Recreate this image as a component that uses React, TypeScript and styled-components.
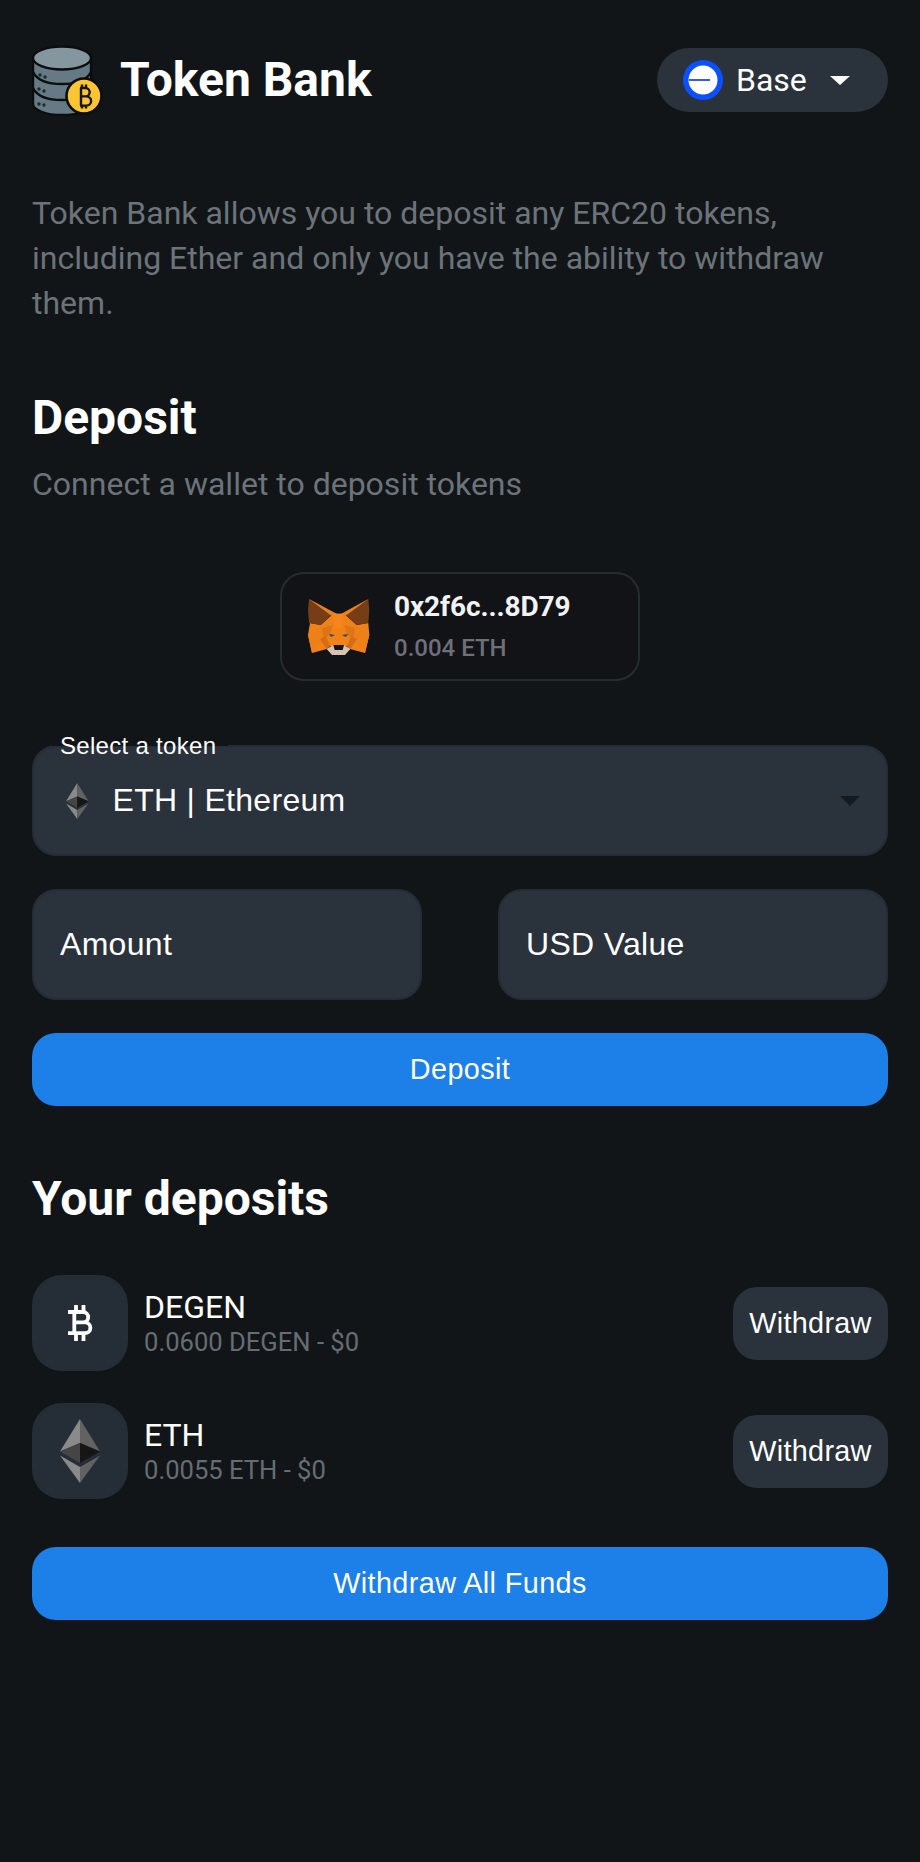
import React from "react";
import styled, { createGlobalStyle } from "styled-components";

const Global = createGlobalStyle`
  html, body { margin: 0; padding: 0; background: #111518; }
  * { box-sizing: border-box; }
`;

const Page = styled.main`
  width: 920px;
  min-height: 1862px;
  padding: 44px 32px 0;
  background: #111518;
  font-family: Roboto, sans-serif;
  color: #fff;
`;
const Header = styled.header`
  display: flex;
  align-items: center;
  justify-content: space-between;
  height: 72px;
`;
const Brand = styled.div`
  display: flex;
  align-items: center;
  gap: 16px;
`;
const Title = styled.h1`
  margin: 0;
  font-size: 48px;
  line-height: 52px;
  font-weight: 700;
`;
const NetworkPill = styled.button`
  width: 231px;
  height: 64px;
  border: 0;
  border-radius: 32px;
  background: #2a323c;
  color: #fff;
  font: 400 32px Roboto, sans-serif;
  display: flex;
  align-items: center;
  padding: 0 0 0 26px;
`;
const NetworkName = styled.span`
  margin-left: 13px;
`;
const PillCaret = styled.span`
  margin-left: 23px;
  width: 0;
  height: 0;
  border-left: 10px solid transparent;
  border-right: 10px solid transparent;
  border-top: 9px solid #fff;
`;
const Intro = styled.p`
  margin: 75px 0 0;
  font-size: 32px;
  line-height: 45px;
  color: #6c7379;
`;
const Heading = styled.h2<{ $top: number }>`
  margin: ${(p) => p.$top}px 0 0;
  font-size: 48px;
  line-height: 52px;
  font-weight: 700;
`;
const Sub = styled.p`
  margin: 22px 0 0;
  font-size: 32px;
  line-height: 36px;
  color: #6c7379;
`;
const WalletRow = styled.div`
  display: flex;
  justify-content: center;
  margin-top: 70px;
`;
const WalletCard = styled.div`
  width: 360px;
  height: 109px;
  border: 2px solid #292b33;
  border-radius: 24px;
  background: #111317;
  display: flex;
  align-items: center;
  padding-left: 26px;
  gap: 24px;
`;
const WalletText = styled.div`
  display: flex;
  flex-direction: column;
  gap: 13px;
`;
const Address = styled.div`
  font-size: 28px;
  line-height: 30px;
  font-weight: 700;
  color: #f2f2f4;
  letter-spacing: -0.1px;
`;
const Balance = styled.div`
  font-size: 24px;
  line-height: 26px;
  font-weight: 500;
  color: #6f6f7a;
`;
const SelectField = styled.div`
  position: relative;
  margin-top: 64px;
  height: 111px;
  background: #2a323c;
  border: 2px solid #252c36;
  border-radius: 24px;
  display: flex;
  align-items: center;
  padding: 0 26px 0 32px;
  font-family: "Liberation Sans", Arial, sans-serif;
  font-size: 32px;
  letter-spacing: 0.3px;
`;
const FloatingLabel = styled.label`
  position: absolute;
  left: 18px;
  top: -15px;
  padding: 0 12px 0 8px;
  height: 28px;
  line-height: 28px;
  font-size: 24px;
  background: linear-gradient(#111518 0 14px, transparent 14px);
`;
const SelectValue = styled.span`
  margin-left: 24px;
  flex: 1;
`;
const DarkCaret = styled.span`
  width: 0;
  height: 0;
  border-left: 10px solid transparent;
  border-right: 10px solid transparent;
  border-top: 10px solid #16191f;
`;
const InputGrid = styled.div`
  display: grid;
  grid-template-columns: 390px 390px;
  justify-content: space-between;
  margin-top: 33px;
`;
const InputBox = styled.div`
  height: 111px;
  padding: 0 26px;
  background: #2a323c;
  border: 2px solid #252c36;
  border-radius: 24px;
  display: flex;
  align-items: center;
  font-family: "Liberation Sans", Arial, sans-serif;
  font-size: 32px;
  letter-spacing: 0.3px;
`;
const PrimaryButton = styled.button<{ $top: number }>`
  display: block;
  width: 100%;
  height: 73px;
  margin-top: ${(p) => p.$top}px;
  border: 0;
  border-radius: 24px;
  background: #1c80e8;
  color: #fff;
  font: 400 28.8px "Liberation Sans", Arial, sans-serif;
  letter-spacing: 0.4px;
`;
const DepositList = styled.div`
  margin-top: 50px;
  display: flex;
  flex-direction: column;
  gap: 32px;
`;
const DepositRow = styled.div`
  display: flex;
  align-items: center;
  height: 96px;
`;
const TokenTile = styled.div`
  width: 96px;
  height: 96px;
  border-radius: 30px;
  background: #252d37;
  display: flex;
  align-items: center;
  justify-content: center;
  flex: none;
`;
const TokenInfo = styled.div`
  margin-left: 16px;
  flex: 1;
`;
const TokenName = styled.div`
  font-size: 32px;
  line-height: 34px;
`;
const TokenAmount = styled.div`
  margin-top: 3px;
  font-size: 25.6px;
  line-height: 30px;
  color: #666d72;
`;
const WithdrawButton = styled.button`
  width: 155px;
  height: 73px;
  border: 0;
  border-radius: 24px;
  background: #2a323c;
  color: #fff;
  font: 400 28.8px "Liberation Sans", Arial, sans-serif;
  letter-spacing: 0.3px;
`;

const LogoIcon = () => (
  <svg width="72" height="72" viewBox="0 0 72 72">
    <g stroke="#0b0d0e" strokeWidth="2.4">
      <path d="M1 14v46c0 6 13 11 29 11s29-5 29-11V14z" fill="#667a86" />
      <ellipse cx="30" cy="14" rx="29" ry="11.5" fill="#84979f" />
      <path d="M1 28c4 8 15 12 29 12s25-4 29-12M1 44c4 8 15 12 29 12s25-4 29-12" fill="none" />
    </g>
    <g fill="#1e2a31">
      <circle cx="8" cy="31" r="1.7" /><circle cx="13" cy="33" r="1.7" />
      <circle cx="7" cy="45" r="1.7" /><circle cx="12" cy="47" r="1.7" />
      <circle cx="7" cy="60" r="1.7" /><circle cx="12" cy="61" r="1.7" />
    </g>
    <circle cx="52" cy="52" r="17.5" fill="#fbc531" stroke="#0b0d0e" strokeWidth="2.6" />
    <path d="M48 44h5.500a4.200 4.200 0 0 1 0 8.400h-5.500h6.500a4.600 4.600 0 0 1 0 9.200h-6.500M49 44v17.600M50 40.500v3.500M54 40.500v3.500M50 61.600v3M54 61.600v3" fill="none" stroke="#17130a" strokeWidth="2.400" />
  </svg>
);

const BaseIcon = () => (
  <svg width="40" height="40" viewBox="0 0 40 40">
    <circle cx="20" cy="20" r="20" fill="#0b50ff" />
    <circle cx="20" cy="20" r="14.500" fill="#fff" />
    <rect x="6" y="19" width="21" height="2" fill="#3b5bf0" />
  </svg>
);

const FoxIcon = () => (
  <svg width="62" height="58" viewBox="0 0 62 58">
    <polygon points="2,25 12.700,27 25.300,15.700 36,15.700 48.700,27 60.300,25 61.300,37 57,55 42,51 38.700,48 22,48 18.700,51 4,55 0,37" fill="#f08218" />
    <polygon points="1,1 25.300,15 12.700,27 1,25 0,12" fill="#763d16" />
    <polygon points="60.300,1 36,15 48.700,27 60.300,25 61.300,12" fill="#763d16" />
    <polygon points="1,1 31,17 25,19" fill="#e8801f" />
    <polygon points="60.300,1 31,17 36,19" fill="#e8801f" />
    <polygon points="25,15.700 36,15.700 34,30 27,30" fill="#f6851b" />
    <polygon points="0,37 12.700,27 16,41 4,55" fill="#ee8018" />
    <polygon points="61.300,37 48.700,27 45,41 57,55" fill="#ee8018" />
    <polygon points="14,30 25,27 22,36 16,41" fill="#dc741a" />
    <polygon points="47,30 36,27 39,36 45,41" fill="#dc741a" />
    <polygon points="12,41 18,38 22,48 18.700,51" fill="#d46d17" />
    <polygon points="49,41 43,38 39,48 42.300,51" fill="#d46d17" />
    <polygon points="21,36 27,37 23,39" fill="#2d4a6b" />
    <polygon points="40,36 34,37 38,39" fill="#2d4a6b" />
    <polygon points="18.700,51 25,47 36,47 42.300,51 37,57 24,57" fill="#d7c1b3" />
    <polygon points="25.300,47 36,47 34.700,52 26.700,52" fill="#161616" />
  </svg>
);

const EthIcon = ({ size }: { size: number }) => (
  <svg width={size * 0.625} height={size} viewBox="0 0 40 64">
    <polygon points="20,0 0,32.500 20,24" fill="#8a8a8a" />
    <polygon points="20,0 40,32.500 20,24" fill="#626262" />
    <polygon points="0,32.500 20,24 20,44" fill="#454545" />
    <polygon points="40,32.500 20,24 20,44" fill="#161616" />
    <polygon points="0,36.500 20,48 20,64" fill="#8a8a8a" />
    <polygon points="40,36.500 20,48 20,64" fill="#626262" />
  </svg>
);

const BitcoinGlyph = () => (
  <svg width="25" height="36" viewBox="0 0 25 36">
    <path
      d="M0 7H15a5.200 5.200 0 0 1 0 10.400H6H17a5.400 5.400 0 0 1 0 10.800H0M6.300 7V28.200M8 0V7M15.500 0V7M8 28.200V36M15.500 28.200V36"
      fill="none"
      stroke="#fff"
      strokeWidth="3.800"
    />
  </svg>
);

export default function App() {
  return (
    <Page>
      <Global />
      <Header>
        <Brand>
          <LogoIcon />
          <Title>Token Bank</Title>
        </Brand>
        <NetworkPill>
          <BaseIcon />
          <NetworkName>Base</NetworkName>
          <PillCaret />
        </NetworkPill>
      </Header>
      <Intro>
        Token Bank allows you to deposit any ERC20 tokens, including Ether and only you have the ability to withdraw them.
      </Intro>
      <Heading $top={66}>Deposit</Heading>
      <Sub>Connect a wallet to deposit tokens</Sub>
      <WalletRow>
        <WalletCard>
          <FoxIcon />
          <WalletText>
            <Address>0x2f6c...8D79</Address>
            <Balance>0.004 ETH</Balance>
          </WalletText>
        </WalletCard>
      </WalletRow>
      <SelectField>
        <FloatingLabel>Select a token</FloatingLabel>
        <EthIcon size={36} />
        <SelectValue>ETH | Ethereum</SelectValue>
        <DarkCaret />
      </SelectField>
      <InputGrid>
        <InputBox>Amount</InputBox>
        <InputBox>USD Value</InputBox>
      </InputGrid>
      <PrimaryButton $top={33}>Deposit</PrimaryButton>
      <Heading $top={67}>Your deposits</Heading>
      <DepositList>
        <DepositRow>
          <TokenTile><BitcoinGlyph /></TokenTile>
          <TokenInfo>
            <TokenName>DEGEN</TokenName>
            <TokenAmount>0.0600 DEGEN - $0</TokenAmount>
          </TokenInfo>
          <WithdrawButton>Withdraw</WithdrawButton>
        </DepositRow>
        <DepositRow>
          <TokenTile><EthIcon size={64} /></TokenTile>
          <TokenInfo>
            <TokenName>ETH</TokenName>
            <TokenAmount>0.0055 ETH - $0</TokenAmount>
          </TokenInfo>
          <WithdrawButton>Withdraw</WithdrawButton>
        </DepositRow>
      </DepositList>
      <PrimaryButton $top={48}>Withdraw All Funds</PrimaryButton>
    </Page>
  );
}
